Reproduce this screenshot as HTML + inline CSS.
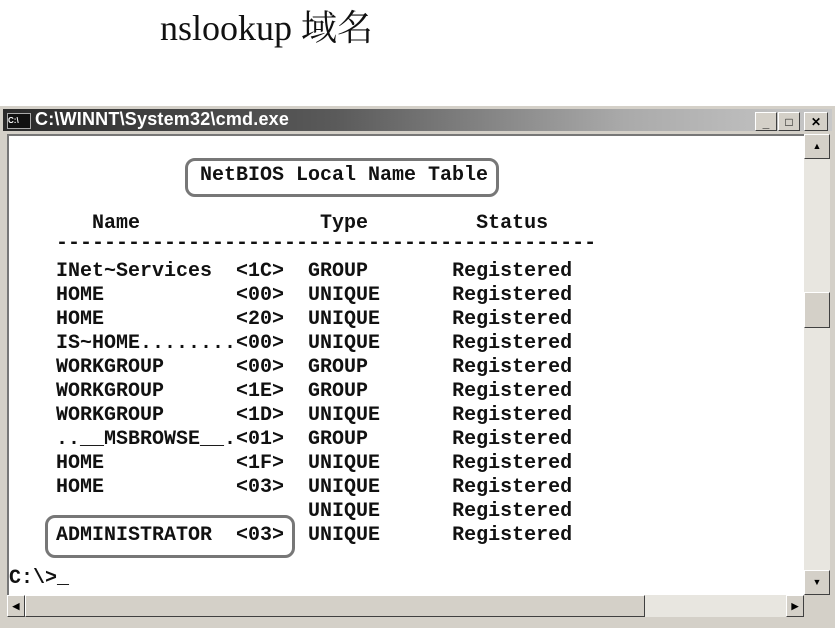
<!DOCTYPE html>
<html><head><meta charset="utf-8"><style>
body{margin:0;width:835px;height:628px;background:#fff;position:relative;overflow:hidden;font-family:"Liberation Mono",monospace;}
.t{position:absolute;white-space:pre;font:bold 20px/24px "Liberation Mono",monospace;color:#111;letter-spacing:0;}
.win{position:absolute;left:0;top:106px;width:835px;height:522px;background:#d4d0c8;}
.title{position:absolute;left:3px;top:3px;width:829px;height:22px;background:linear-gradient(90deg,#2a2a2a,#5a5a5a 40%,#aaa 75%,#c8c8c8);}
.content{position:absolute;left:7px;top:28px;width:796px;height:459px;background:#fff;border-top:2px solid #777;border-left:2px solid #777;}
.vs{position:absolute;left:804px;top:28px;width:26px;height:461px;background:#e8e6e0;}
.btn{position:absolute;background:#d4d0c8;border:1px solid;border-color:#fff #404040 #404040 #fff;box-sizing:border-box;font:bold 12px Liberation Sans,sans-serif;text-align:center;color:#000;}
.box{position:absolute;border:3px solid #777;border-radius:10px;}
</style></head><body>
<div style="position:absolute;left:160px;top:0px;font:36px 'Liberation Serif','Noto Serif CJK SC',serif;color:#111;">nslookup 域名</div>
<div class="win">
 <div class="title">
  <div style="position:absolute;left:4px;top:4px;width:22px;height:14px;background:#111;border:1px solid #aaa;color:#fff;font:bold 8px 'Liberation Sans',sans-serif;line-height:14px;">C:\</div>
  <div style="position:absolute;left:32px;top:0px;color:#fff;font:bold 18px 'Liberation Sans',sans-serif;letter-spacing:0.2px;">C:\WINNT\System32\cmd.exe</div>
  <div class="btn" style="left:752px;top:3px;width:22px;height:19px;line-height:20px">_</div>
  <div class="btn" style="left:775px;top:3px;width:22px;height:19px;line-height:18px">□</div>
  <div class="btn" style="left:801px;top:3px;width:24px;height:19px;line-height:18px">✕</div>
 </div>
 <div class="content"></div>
 <div class="vs">
  <div class="btn" style="left:0;top:0;width:26px;height:25px;line-height:22px;font-size:9px">▲</div>
  <div class="btn" style="left:0;top:158px;width:26px;height:36px"></div>
  <div class="btn" style="left:0;top:436px;width:26px;height:25px;line-height:22px;font-size:9px">▼</div>
 </div>
 <div style="position:absolute;left:7px;top:489px;width:797px;height:22px;background:#e8e6e0;">
  <div class="btn" style="left:0;top:0;width:18px;height:22px;line-height:20px;font-size:9px">◀</div>
  <div class="btn" style="left:18px;top:0;width:620px;height:22px"></div>
  <div class="btn" style="left:779px;top:0;width:18px;height:22px;line-height:20px;font-size:9px">▶</div>
 </div>
</div>
<div class="box" style="left:185px;top:158px;width:308px;height:33px;"></div>
<div class="t" style="left:200px;top:164px;">NetBIOS Local Name Table</div>
<div class="t" style="left:56px;top:212px;">   Name               Type         Status</div>
<div class="t" style="left:56px;top:232px;">---------------------------------------------</div>
<div class="t" style="left:56px;top:260px;">INet~Services  &lt;1C&gt;  GROUP       Registered
HOME           &lt;00&gt;  UNIQUE      Registered
HOME           &lt;20&gt;  UNIQUE      Registered
IS~HOME........&lt;00&gt;  UNIQUE      Registered
WORKGROUP      &lt;00&gt;  GROUP       Registered
WORKGROUP      &lt;1E&gt;  GROUP       Registered
WORKGROUP      &lt;1D&gt;  UNIQUE      Registered
..__MSBROWSE__.&lt;01&gt;  GROUP       Registered
HOME           &lt;1F&gt;  UNIQUE      Registered
HOME           &lt;03&gt;  UNIQUE      Registered
                     UNIQUE      Registered
ADMINISTRATOR  &lt;03&gt;  UNIQUE      Registered</div>
<div class="box" style="left:45px;top:515px;width:244px;height:37px;"></div>
<div class="t" style="left:9px;top:567px;">C:\&gt;_</div>
</body></html>
